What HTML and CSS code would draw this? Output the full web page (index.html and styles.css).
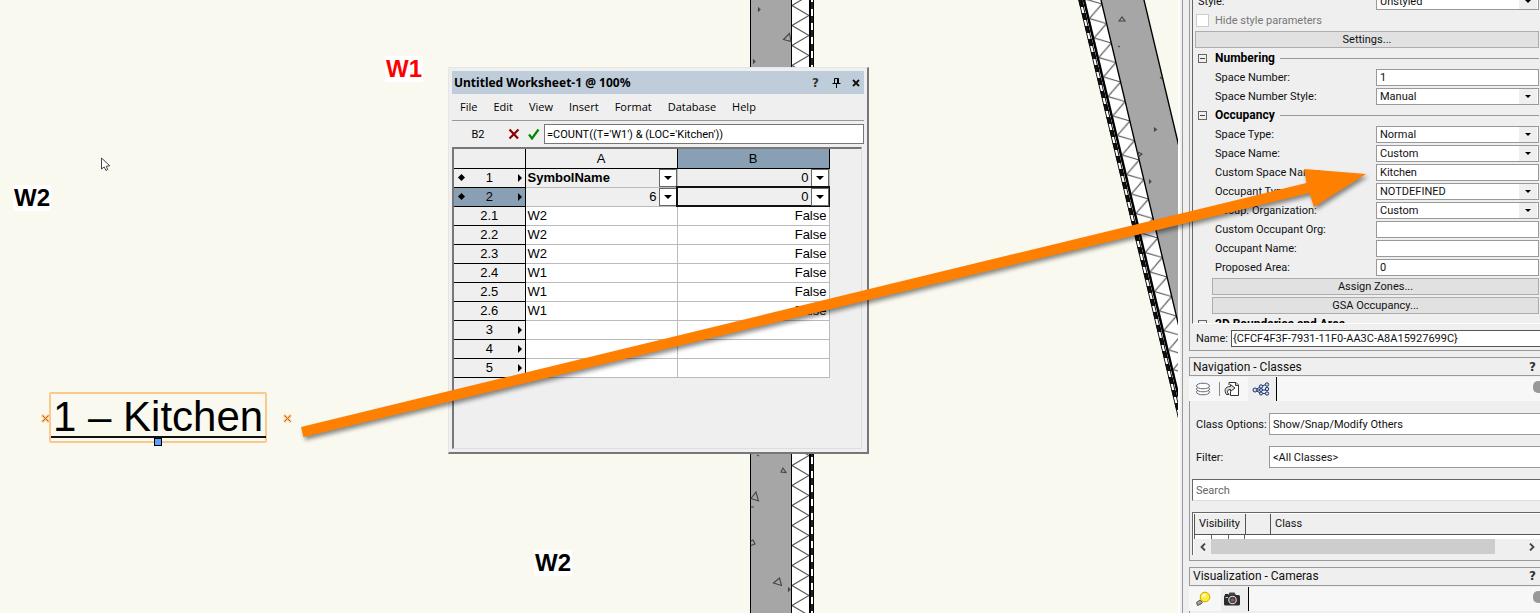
FILE: index.html
```html
<!DOCTYPE html>
<html lang="en">
<head>
<meta charset="utf-8">
<title>Untitled Worksheet-1</title>
<link rel="stylesheet" href="styles.css">
</head>
<body>
<div class="app">
  <main class="canvas">
    <svg class="drawing" aria-hidden="true">
      <defs>
        <pattern id="batt" x="792" y="5" width="18" height="20" patternUnits="userSpaceOnUse">
          <rect width="18" height="20" fill="#fff"/>
          <path d="M0 0.5L17 10.5L0 20.5M17 -9.5L0 0.5" fill="none" stroke="#555" stroke-width="1.1"/>
        </pattern>
        <pattern id="battSlant" x="1085" y="4" width="16" height="19.5" patternUnits="userSpaceOnUse">
          <rect width="16" height="19.5" fill="#fff"/>
          <path d="M16 0L0 14.5L16 19.5M0 -5L16 0" fill="none" stroke="#444" stroke-width="1"/>
        </pattern>
      </defs>
      <g>
        <rect x="750" y="-5" width="42" height="900" fill="#a6a6a6"/>
        <rect x="792" y="-5" width="18" height="900" fill="url(#batt)"/>
        <path d="M750.5 0V900M791.5 0V900" stroke="#000" fill="none"/>
        <path d="M810 0V900" stroke="#000" stroke-width="2"/>
        <path d="M812 0V900" stroke="#fff" stroke-width="2"/>
        <path d="M812.5 2V900" stroke="#222" stroke-width="3" stroke-dasharray="7 7"/>
        <path d="M813.5 0V900" stroke="#000"/>
        <g fill="none" stroke="#444" stroke-width="1.1">
          <path d="M783.5 39.5L789.500 33.500L791 41.500ZM781 472l2-4 3 4.500zM751 498.500l5-6.500 2.500 9zM751 541l2-1 2 4-4 1.500M773.500 583l6-5 2 7.500z"/>
          <path d="M758.500 8v3l1.500-1.500zM753.500 60v3l1.500-1.500zM751 507h3M757 455l2 1M788.500 588v3l1.500-1.500z"/>
        </g>
      </g>
      <g transform="skewX(13.415)">
        <rect x="1100" y="0" width="44" height="900" fill="#a6a6a6"/>
        <rect x="1085" y="0" width="16" height="900" fill="url(#battSlant)"/>
        <path d="M1101 0V900M1144 0V900" stroke="#000" stroke-width="1.400"/>
        <path d="M1084 0V900" stroke="#000" stroke-width="2.600"/>
        <path d="M1080.500 0V900" stroke="#fff" stroke-width="4"/>
        <path d="M1080.500 0V900" stroke="#111" stroke-width="4" stroke-dasharray="7 6"/>
        <path d="M1078.700 0V900M1081.800 0V900" stroke="#000" stroke-width=".9"/>
      </g>
      <g fill="none" stroke="#444" stroke-width="1.100">
        <path d="M1119 21l3-4 3 4zM1118 46l2 1M1154.500 128v3l2-1.500zM1138 152l4 2-3 2.500zM1149.500 180v3l1.500-1.500zM1160 77l2 2"/>
      </g>
    </svg>

    <span class="tag tag-red">W1</span>
    <span class="tag tag-left">W2</span>
    <span class="tag tag-bottom">W2</span>

    <svg class="pointer" viewBox="0 0 12 15" width="12" height="15" aria-hidden="true"><path d="M1.500 1v11l2.700-2 1.800 3.500 1.800-1-1.600-3.200 3.600-.5z" fill="#fff" stroke="#444"/></svg>

    <div class="space-label">1 – Kitchen
      <svg class="knob knob-left" viewBox="0 0 9 9" width="9" height="9"><path d="M1 1l7 7M8 1l-7 7" stroke="#fbc88d" stroke-width="3"/><path d="M1.500 1.500l6 6M7.500 1.500l-6 6" stroke="#b8661c"/></svg>
      <svg class="knob knob-right" viewBox="0 0 9 9" width="9" height="9"><path d="M1 1l7 7M8 1l-7 7" stroke="#fbc88d" stroke-width="3"/><path d="M1.500 1.500l6 6M7.500 1.500l-6 6" stroke="#b8661c"/></svg>
      <i class="grip"></i>
    </div>

    <section class="worksheet">
      <header class="ws-title">
        <h1>Untitled Worksheet-1 @ 100%</h1>
        <button class="ws-btn help" aria-label="Help">?</button>
        <button class="ws-btn" aria-label="Pin"><svg viewBox="0 0 9 10" width="9" height="10"><path d="M2.500 5.500V.5h3v5M6.500 .5v5M5.500 .5h1M.5 5.500h8M4.500 6v4" fill="none" stroke="#000"/></svg></button>
        <button class="ws-btn" aria-label="Close"><svg viewBox="0 0 8 8" width="8" height="8"><path d="M1 1l6 6M7 1l-6 6" stroke="#111" stroke-width="1.800"/></svg></button>
      </header>
      <nav class="ws-menu">
        <button>File</button><button>Edit</button><button>View</button><button>Insert</button><button>Format</button><button>Database</button><button>Help</button>
      </nav>
      <div class="formula">
        <label for="fx">B2</label>
        <button aria-label="Cancel"><svg viewBox="0 0 12 12" width="12" height="12"><path d="M1.500 1.500l8.500 9M10.500 1.500l-9 9" stroke="#8b0000" stroke-width="2.200"/></svg></button>
        <button aria-label="Accept"><svg viewBox="0 0 12 12" width="12" height="12"><path d="M1 6.500l3 4 6.500-9" fill="none" stroke="#008a00" stroke-width="2.200"/></svg></button>
        <input id="fx" value="=COUNT((T='W1') &amp; (LOC='Kitchen'))">
      </div>
      <div class="grid-area">
        <table class="grid">
          <colgroup><col class="c-head"><col class="c-a"><col class="c-b"></colgroup>
          <thead><tr><th></th><th>A</th><th class="active">B</th></tr></thead>
          <tbody>
            <tr class="db"><th><i class="dia"></i>1<i class="tri"></i></th><td class="bold">SymbolName<button class="drop" aria-label="Options"></button></td><td class="num">0<button class="drop" aria-label="Options"></button></td></tr>
            <tr class="db"><th class="active"><i class="dia"></i>2<i class="tri"></i></th><td class="num">6<button class="drop" aria-label="Options"></button></td><td class="num selected">0<button class="drop" aria-label="Options"></button></td></tr>
            <tr><th>2.1</th><td>W2</td><td class="val">False</td></tr>
            <tr><th>2.2</th><td>W2</td><td class="val">False</td></tr>
            <tr><th>2.3</th><td>W2</td><td class="val">False</td></tr>
            <tr><th>2.4</th><td>W1</td><td class="val">False</td></tr>
            <tr><th>2.5</th><td>W1</td><td class="val">False</td></tr>
            <tr><th>2.6</th><td>W1</td><td class="val">False</td></tr>
            <tr><th>3<i class="tri"></i></th><td></td><td></td></tr>
            <tr><th>4<i class="tri"></i></th><td></td><td></td></tr>
            <tr><th>5<i class="tri"></i></th><td></td><td></td></tr>
          </tbody>
        </table>
      </div>
    </section>
  </main>

  <aside class="side">
    <section class="object-info">
      <div class="scroller">
        <div class="rows">
          <div class="row top"><label for="style">Style:</label><span class="pick"><select id="style"><option>Unstyled</option></select></span></div>
          <div class="row check"><input type="checkbox" id="hide" disabled><label for="hide">Hide style parameters</label></div>
          <div class="row wide"><button>Settings...</button></div>
          <h2 class="row head"><i class="fold"></i>Numbering</h2>
          <div class="row"><label for="sn">Space Number:</label><input id="sn" value="1"></div>
          <div class="row"><label for="sns">Space Number Style:</label><span class="pick"><select id="sns"><option>Manual</option></select></span></div>
          <h2 class="row head"><i class="fold"></i>Occupancy</h2>
          <div class="row"><label for="st">Space Type:</label><span class="pick"><select id="st"><option>Normal</option></select></span></div>
          <div class="row"><label for="snm">Space Name:</label><span class="pick"><select id="snm"><option>Custom</option></select></span></div>
          <div class="row"><label for="csn">Custom Space Name:</label><input id="csn" value="Kitchen"></div>
          <div class="row"><label for="ot">Occupant Type:</label><span class="pick"><select id="ot"><option>NOTDEFINED</option></select></span></div>
          <div class="row"><label for="oo">Occup. Organization:</label><span class="pick"><select id="oo"><option>Custom</option></select></span></div>
          <div class="row"><label for="coo">Custom Occupant Org:</label><input id="coo"></div>
          <div class="row"><label for="on">Occupant Name:</label><input id="on"></div>
          <div class="row"><label for="pa">Proposed Area:</label><input id="pa" value="0"></div>
          <div class="row inset"><button>Assign Zones...</button></div>
          <div class="row inset"><button>GSA Occupancy...</button></div>
          <h2 class="row head"><i class="fold"></i>2D Boundaries and Area</h2>
        </div>
      </div>
      <div class="name-row"><label for="nm">Name:</label><input id="nm" value="{CFCF4F3F-7931-11F0-AA3C-A8A15927699C}"></div>
    </section>

    <section class="palette">
      <header class="pal-title"><h2>Navigation - Classes</h2><button class="help" aria-label="Help">?</button></header>
      <div class="tabs">
        <button class="tab" aria-label="Layers"><svg viewBox="0 0 16 16" width="16" height="16" fill="#fff" stroke="#667"><ellipse cx="8" cy="11" rx="6.500" ry="2.800"/><ellipse cx="8" cy="8" rx="6.500" ry="2.800"/><ellipse cx="8" cy="5" rx="6.500" ry="2.800"/></svg></button>
        <i class="rule"></i>
        <button class="tab sheets" aria-label="Sheets"><svg viewBox="0 0 16 16" width="16" height="16" fill="#fff" stroke="#333"><path d="M5 4V1.500h7l2.500 2.500v10.500H6.500V11"/><path d="M11.500 1.500v3h3" fill="#ccc"/><path d="M6.500 3.500L11 7 6.500 10.500V8.500C4 8.500 3 9.500 3.500 11.500L5 13.500H2.500C0 10 .5 5.500 6.500 5.500z" fill="#ddd"/></svg></button>
        <button class="tab current classes" aria-label="Classes"><svg viewBox="0 0 18 14" width="18" height="14" fill="#cfdcf5" stroke="#1d3566"><path d="M3 8l6-3.500 6-2.500M3 8h12M3 8l6 3.500h6"/><circle cx="3" cy="8" r="2"/><circle cx="9" cy="4.500" r="1.700"/><circle cx="9" cy="8" r="1.500"/><circle cx="9" cy="11.500" r="1.500"/><circle cx="15" cy="2.500" r="1.700"/><circle cx="15" cy="7" r="1.700"/><circle cx="15" cy="11.500" r="1.700"/></svg></button>
        <i class="more"></i>
      </div>
      <div class="pal-body">
        <div class="field"><label for="co">Class Options:</label><select id="co"><option>Show/Snap/Modify Others</option></select></div>
        <div class="field"><label for="fl">Filter:</label><select id="fl"><option>&lt;All Classes&gt;</option></select></div>
        <input class="search" type="text" placeholder="Search" aria-label="Search">
        <div class="class-list">
          <table><thead><tr><th class="vis">Visibility</th><th class="gap"></th><th>Class</th></tr></thead></table>
          <div class="sliver"><i></i><i></i><i></i></div>
          <div class="hbar"><button aria-label="Scroll left"><svg viewBox="0 0 8 8" width="8" height="8"><path d="M6 .5L2.500 4 6 7.500" fill="none" stroke="#444" stroke-width="1.800"/></svg></button><span class="track"><i></i></span><button aria-label="Scroll right"><svg viewBox="0 0 8 8" width="8" height="8"><path d="M2 .5L5.500 4 2 7.500" fill="none" stroke="#444" stroke-width="1.800"/></svg></button></div>
        </div>
      </div>
    </section>

    <section class="palette last">
      <header class="pal-title"><h2>Visualization - Cameras</h2><button class="help" aria-label="Help">?</button></header>
      <div class="tabs">
        <button class="tab lights" aria-label="Lights"><svg viewBox="0 0 16 16" width="16" height="16"><path d="M5 9l-3.500 2.500 1 3L6 13l1.500-2z" fill="#aaa08a" stroke="#555"/><circle cx="10" cy="6" r="4.800" fill="#ffee3c" stroke="#d6a400"/><circle cx="9" cy="4.500" r="1.800" fill="#fffbc0"/></svg></button>
        <button class="tab current camera" aria-label="Cameras"><svg viewBox="0 0 18 14" width="18" height="14"><rect x="1" y="3" width="16" height="10.500" rx="1.500" fill="#2c2c2c"/><path d="M5 3l1.500-2.500h5L13 3z" fill="#444"/><path d="M2 2h3v1H2z" fill="#222"/><circle cx="9.500" cy="8" r="4.300" fill="#ddd"/><circle cx="9.500" cy="8" r="3.200" fill="#445"/><circle cx="9.500" cy="8" r="1.500" fill="#a55"/><path d="M2.500 5h2.500v1H2.500z" fill="#ccc"/></svg></button>
        <i class="more"></i>
      </div>
      <div class="pal-body"></div>
    </section>
  </aside>

  <svg class="callout" aria-hidden="true">
    <path d="M301 427L1306.500 183L1304 169L1366 174L1314 207L1309.500 193L303.500 437Z" fill="#ff8000"/>
  </svg>
</div>
</body>
</html>
```
FILE: styles.css
```css
* { box-sizing: border-box; }
body { margin: 0; overflow: hidden; font: 11px/13px Roboto, "Liberation Sans", sans-serif; color: #111; }
button, input, select { font: inherit; color: inherit; margin: 0; padding: 0; border: 0; border-radius: 0; background: none; }
select { appearance: none; }
h1, h2 { margin: 0; font: inherit; }
i { display: block; }

.app { position: relative; display: flex; height: 100vh; overflow: hidden; }
.canvas { position: relative; flex: 1; min-width: 0; overflow: hidden; background: #f9f9f0; }
.drawing { position: absolute; left: 0; top: 0; width: 100%; height: 100%; }
.callout { position: absolute; left: 0; top: 0; width: 100%; height: 100%; pointer-events: none; filter: drop-shadow(2px 3px 2px rgba(0, 0, 0, .45)); }

.tag { position: absolute; padding: 0 1px; background: #fff; font: bold 24px/26px "Liberation Sans", Arial, sans-serif; color: #000; }
.tag-red { left: 385px; top: 56px; color: #f00; }
.tag-left { left: 13px; top: 185px; }
.tag-bottom { left: 534px; top: 550px; }
.pointer { position: absolute; left: 100px; top: 157px; }

.space-label { position: absolute; left: 49px; top: 392px; height: 51px; padding: 0 2px; border: 2px solid #fbc88d; border-radius: 2px; font: 42px/46px "Liberation Sans", Arial, sans-serif; color: #000; white-space: nowrap; }
.space-label::after { content: ""; position: absolute; left: 0; right: -1px; bottom: 3px; border-bottom: 2px solid #111; }
.knob { position: absolute; top: 20px; }
.knob-left { left: -10px; }
.knob-right { right: -27px; }
.grip { position: absolute; z-index: 1; left: 103px; top: 44px; width: 8px; height: 8px; border: 1px solid #000; background: #5aa0ff; }

/* Worksheet window */
.worksheet { position: absolute; left: 448px; top: 67px; width: 421px; height: 387px; padding: 3px; display: flex; flex-direction: column; background: #efefef; border: 1px solid #e6e6e6; border-right: 2px solid #777; border-bottom: 2px solid #777; color: #000; }
.ws-title { display: flex; align-items: center; height: 23px; padding: 0 0 0 2px; background: #bfcddb; }
.ws-title h1 { flex: 1; font: bold 12px/16px "Noto Sans", "Open Sans", sans-serif; }
.ws-btn { display: grid; place-items: center; width: 21px; height: 20px; }
.ws-btn:last-child { width: 17px; }
.help { font: bold 12px/14px "DejaVu Sans", sans-serif; color: #333; }
.ws-menu { display: flex; gap: 16px; height: 27px; padding: 0 8px; border-bottom: 1px solid #999; font: 11px/16px "Open Sans", "Noto Sans", sans-serif; }
.formula { display: flex; align-items: center; height: 26px; }
.formula label { width: 52px; text-align: center; }
.formula button { width: 20px; height: 14px; display: grid; place-items: center; }
.formula input { flex: 1; min-width: 0; height: 20px; padding: 0 2px; border: 1px solid #777; background: #fff; }
.grid-area { flex: 1; margin-right: 2px; border-top: 2px solid #777; border-left: 2px solid #777; border-right: 1px solid #ddd; border-bottom: 1px solid #ddd; }
.grid { table-layout: fixed; width: 375px; border-collapse: collapse; font: 13px/17px "Liberation Sans", Arial, sans-serif; }
.c-head { width: 71px; }
.c-a, .c-b { width: 152px; }
.grid th, .grid td { position: relative; height: 19px; padding: 0; }
.grid th { border: 1px solid #000; border-left: 0; background: #efefef; font-weight: normal; text-align: center; }
.grid thead th { border-top: 0; }
.grid th.active { background: #889fb4; }
.grid td { padding: 0 2px; border: 1px solid #bbb; background: #fff; text-align: left; }
.grid td.val { text-align: right; }
.grid td.num { padding-right: 20px; text-align: right; }
.grid .db td { background: #efefef; }
.grid td.bold { font-weight: bold; }
.grid td.selected { outline: 2px solid #111; outline-offset: -1px; }
.drop { position: absolute; right: 0; top: 0; width: 18px; height: 18px; border: 1px solid #666; background: #fff; }
.drop::after { content: ""; position: absolute; left: 4px; top: 6px; border: 4px solid transparent; border-top-color: #000; border-bottom: 0; }
.dia { position: absolute; left: 5px; top: 6px; width: 5px; height: 5px; background: #000; transform: rotate(45deg); }
.tri { position: absolute; right: 3px; top: 5px; border: 4px solid transparent; border-left-color: #000; border-right: 0; }

/* Side palettes */
.side { flex: none; width: 362px; padding-left: 11px; background: linear-gradient(90deg, #fff 0 2px, #efefef 2px 4px, #999 4px 5px, #efefef 5px); display: flex; flex-direction: column; gap: 6px; }
.object-info { flex: none; border-left: 1px solid #999; border-bottom: 1px solid #999; padding-left: 2px; }
.scroller { height: 324px; overflow: hidden; border-left: 1px solid #666; border-bottom: 1px solid #fff; padding: 0 1px 0 2px; }
.rows { margin-top: -8px; }
.row { display: flex; align-items: center; height: 19px; padding-left: 20px; }
.row > label { flex: 1; min-width: 0; white-space: nowrap; }
.row > input:not([type]), .pick { flex: none; width: 163px; height: 17px; border: 1px solid #999; background: #fff; }
.row > input { padding: 0 3px; }
.row.top { padding-left: 3px; }
.row.check { padding-left: 1px; gap: 6px; color: #777; }
.check input { appearance: none; width: 13px; height: 13px; border: 1px solid #ccc; background: #fff; }
.row.wide { padding-left: 0; }
.row.inset { padding-left: 17px; }
.row > button { flex: 1; height: 17px; border: 1px solid #adadad; background: #e1e1e1; }
.row.head { padding-left: 3px; font-size: 12px; font-weight: bold; color: #000; white-space: nowrap; }
.row.head::after { content: ""; flex: 1; margin-left: 5px; border-top: 1px solid #999; }
.fold { position: relative; width: 9px; height: 9px; margin-right: 8px; border: 1px solid #666; }
.fold::after { content: ""; position: absolute; left: 1px; right: 1px; top: 3px; border-top: 1px solid #444; }
.pick { position: relative; display: block; }
.pick select { display: block; width: 100%; height: 15px; padding: 0 3px; }
.pick::before { content: ""; position: absolute; right: 1px; top: 0; bottom: 0; width: 18px; background: #efefef; pointer-events: none; }
.pick::after { content: ""; position: absolute; right: 7px; top: 6px; border: 3px solid transparent; border-top-color: #000; border-bottom: 0; pointer-events: none; }
.name-row { display: flex; align-items: center; height: 26px; padding: 2px 0 0 4px; gap: 4px; }
.name-row label { width: 31px; }
.name-row input { flex: 1; min-width: 0; height: 17px; padding: 0 1px; border: 1px solid #555; border-right: 0; background: #fff; }

.palette { flex: none; }
.palette.last { flex: 1; }
.pal-title { display: flex; align-items: center; justify-content: space-between; height: 19px; padding: 0 4px 0 3px; border: 1px solid #999; border-right: 0; }
.pal-title h2 { font: 12px/16px Roboto, sans-serif; }
.tabs { display: flex; align-items: stretch; height: 24px; margin-top: 1px; background: #f7f7f7; }
.tab { display: grid; place-items: center; width: 28px; }
.tab.current { background: #efefef; border-right: 1px solid #000; }
.tab.sheets { padding-right: 4px; }
.tab.classes { width: 29px; padding-right: 3px; }
.tab.lights { width: 32px; padding-right: 4px; }
.tab.camera { padding-right: 5px; }
.rule { width: 1px; margin: 5px 0 5px 2px; background: #888; }
.more { width: 7px; height: 12px; margin: 4px 0 0 auto; border-radius: 5px 0 0 5px; background: #999; }
.pal-body { display: flex; flex-direction: column; gap: 11px; border-left: 1px solid #999; border-bottom: 1px solid #999; padding: 12px 0 5px 2px; }
.last .pal-body { border-bottom: 0; height: 20px; }
.field { display: flex; align-items: center; padding-left: 4px; }
.field label { width: 73px; white-space: nowrap; }
.field select { flex: 1; min-width: 0; height: 22px; padding: 0 3px; border: 1px solid #999; border-right: 0; background: #fff; }
.search { height: 22px; padding: 0 3px; border: 1px solid #666; border-right: 0; border-bottom-color: #ddd; background: #fff; }
.search::placeholder { color: #666; opacity: 1; }
.class-list { border-top: 1px solid #666; border-left: 1px solid #666; background: #fff; padding: 1px 0 0 1px; }
.class-list table { width: 100%; border-collapse: collapse; table-layout: fixed; }
.class-list th { height: 20px; padding: 0 4px; border: 1px solid #555; border-top: 0; border-right: 0; background: #efefef; font-weight: normal; text-align: left; }
.class-list th.vis { width: 51px; }
.class-list th.gap { width: 25px; }
.sliver { display: flex; height: 4px; }
.sliver i { width: 17px; border-left: 1px solid #666; }
.sliver i:last-child { border-right: 1px solid #666; }
.hbar { display: flex; height: 16px; background: #efefef; }
.hbar button { width: 17px; display: grid; place-items: center; }
.track { flex: 1; }
.track i { width: 91%; height: 15px; background: #cdcdcd; }
```
